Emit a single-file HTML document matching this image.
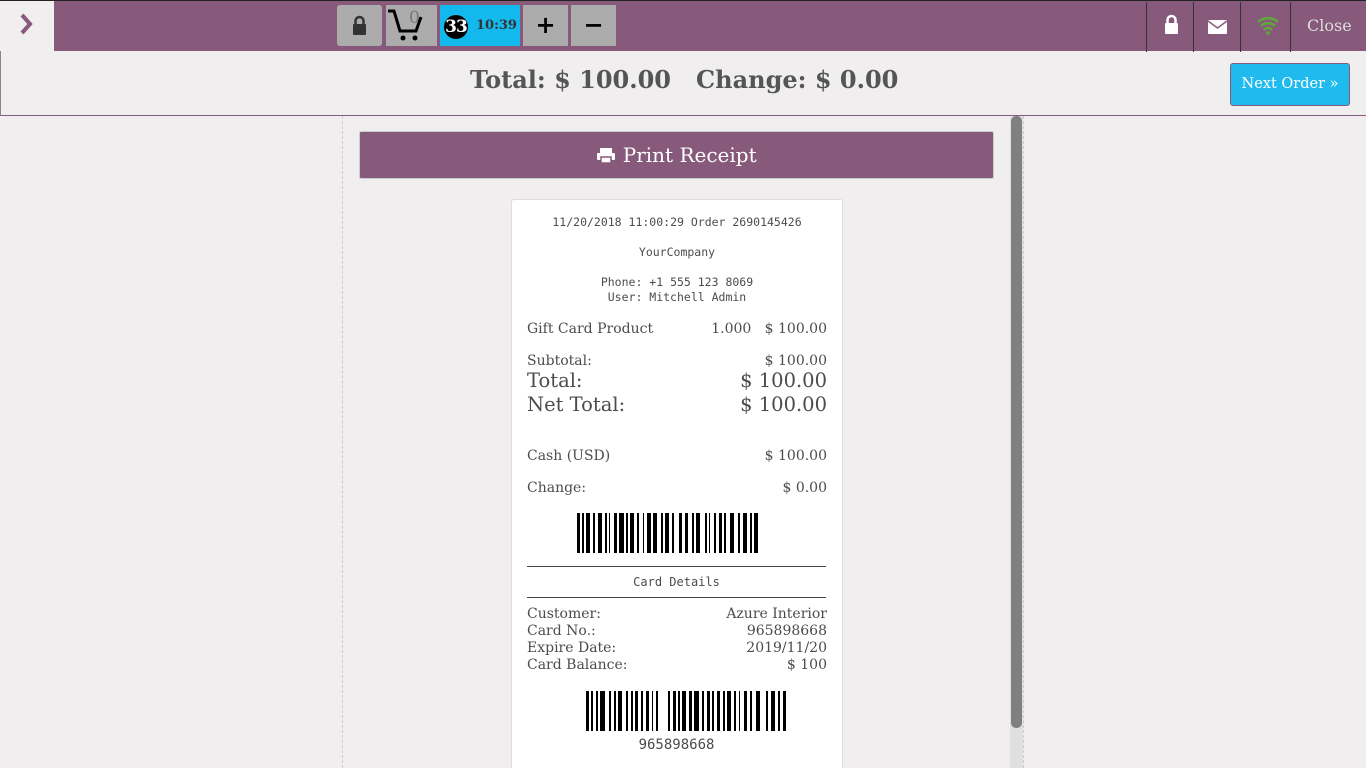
<!DOCTYPE html>
<html style="overflow:hidden"><head><meta charset="utf-8"><style>
*{box-sizing:border-box;margin:0;padding:0}
body{width:1366px;height:768px;overflow:hidden;background:#f0eeef;font-family:"DejaVu Serif","Liberation Serif",serif;color:#4c4c4c;position:relative}
.top{position:absolute;left:0;top:0;width:1366px;height:51px;background:#875a7b;border-top:1px solid #222}
.home{position:absolute;left:0;top:1px;width:54px;height:50px;background:#f0eeef}
.btn{position:absolute;top:4px;height:41px;background:#acacac;border-radius:3px}
.hdr{position:absolute;left:0;top:51px;width:1366px;height:65px;border-bottom:1px solid #875a7b;border-left:1px solid #888}
.mono{font-family:"DejaVu Sans Mono","Liberation Mono",monospace}
.r{position:absolute;left:527px;width:300px;font-size:14px;display:flex;justify-content:space-between}
.ic{position:absolute;top:1px;height:50px;border-left:1px solid #333}
</style></head><body>
<div class="top">
 <div class="btn" style="left:337px;width:45px"><svg width="45" height="41"><rect x="16" y="19" width="13" height="11" rx="1" fill="#333"/><path d="M18.5 19v-3a4 4 0 0 1 8 0v3" stroke="#333" stroke-width="2.5" fill="none"/></svg></div>
 <div class="btn" style="left:386px;width:51px;border-radius:0"><svg width="51" height="41"><path d="M2 6h6l6 20h16l5-14" stroke="#000" stroke-width="3" fill="none"/><circle cx="17" cy="33" r="2.5"/><circle cx="29" cy="33" r="2.5"/><text x="23" y="18" font-size="17" fill="#777" font-family="DejaVu Serif">0</text></svg></div>
 <div class="btn" style="left:440px;width:80px;background:#13b8ec;border-radius:0"><div style="position:absolute;left:4px;top:10px;width:24px;height:24px;border-radius:50%;background:#000;color:#fff;font-weight:bold;font-size:17px;line-height:24px;text-align:center;letter-spacing:-1px">33</div><div style="position:absolute;left:36px;top:13px;font-size:13px;font-weight:bold;color:#333">10:39</div></div>
 <div class="btn" style="left:523px;width:45px;border-radius:0;font:bold 24px 'DejaVu Sans';color:#000;text-align:center;line-height:41px">+</div>
 <div class="btn" style="left:571px;width:45px;border-radius:0;font:bold 24px 'DejaVu Sans';color:#000;text-align:center;line-height:41px">−</div>
 <div class="ic" style="left:1146px;width:47px"><svg width="47" height="50"><rect x="18" y="21" width="13" height="11" rx="1" fill="#fff"/><path d="M20.5 21v-3a4 4 0 0 1 8 0v3" stroke="#fff" stroke-width="2.5" fill="none"/></svg></div>
 <div class="ic" style="left:1193px;width:47px"><svg width="47" height="50"><rect x="14" y="18" width="19" height="14" rx="1" fill="#fff"/><path d="M14 19l9.5 7 9.5-7" stroke="#875a7b" stroke-width="1.5" fill="none"/></svg></div>
 <div class="ic" style="left:1240px;width:50px"><svg width="50" height="50"><g stroke="#5ea83a" stroke-width="2.5" fill="none"><path d="M17 20a15 15 0 0 1 20 0"/><path d="M20 24a10 10 0 0 1 14 0"/><path d="M23 28a5 5 0 0 1 8 0"/></g><circle cx="27" cy="31" r="1.8" fill="#5ea83a"/></svg></div>
 <div class="ic" style="left:1290px;width:76px;color:#ddd;font-size:16px;line-height:48px;padding-left:16px">Close</div>
</div>
<div class="home"><svg width="54" height="50"><path d="M22 14l8 9-8 9" stroke="#875a7b" stroke-width="4" fill="none"/></svg></div>
<div class="hdr">
 <div style="position:absolute;left:469px;top:14px;font-size:24px;font-weight:bold;color:#555;white-space:nowrap">Total: $ 100.00&nbsp;&nbsp; Change: $ 0.00</div>
 <div style="position:absolute;left:1229px;top:12px;width:120px;height:43px;background:#1fbbee;border:1px solid #875a7b;border-radius:3px;color:#fff;font-size:14.5px;line-height:41px;text-align:center">Next Order »</div>
</div>
<div style="position:absolute;left:342px;top:116px;width:682px;height:652px;border-left:1px dashed #ccc;border-right:1px dashed #ccc"></div>
<div style="position:absolute;left:1010px;top:116px;width:13px;height:652px;background:#e0e0e0"></div>
<div style="position:absolute;left:1011px;top:116px;width:11px;height:612px;background:#808080;border-radius:5px"></div>
<div style="position:absolute;left:359px;top:131px;width:635px;height:48px;background:#875a7b;border:1px solid #ccc;border-radius:2px;color:#fff;font-size:20px;line-height:46px;text-align:center"><svg width="20" height="16" style="vertical-align:-1px"><rect x="4" y="1" width="12" height="5" fill="#fff"/><rect x="1" y="6" width="18" height="7" rx="1" fill="#fff"/><rect x="5" y="10" width="10" height="6" fill="#fff" stroke="#875a7b" stroke-width="1.5"/></svg> Print Receipt</div>
<div style="position:absolute;left:511px;top:199px;width:332px;height:569px;background:#fff;border:1px solid #ddd;border-bottom:none;border-radius:3px 3px 0 0"></div>
<div class="mono" style="position:absolute;left:512px;top:215px;width:330px;text-align:center;font-size:11.5px;line-height:15px">11/20/2018 11:00:29 Order 2690145426<br><br>YourCompany<br><br>Phone: +1 555 123 8069<br>User: Mitchell Admin</div>
<div class="r" style="top:321px"><span>Gift Card Product</span><span>1.000&nbsp;&nbsp; $ 100.00</span></div>
<div class="r" style="top:353px"><span>Subtotal:</span><span>$ 100.00</span></div>
<div class="r" style="top:369px;font-size:19.5px"><span>Total:</span><span>$ 100.00</span></div>
<div class="r" style="top:393px;font-size:19.5px"><span>Net Total:</span><span>$ 100.00</span></div>
<div class="r" style="top:448px"><span>Cash (USD)</span><span>$ 100.00</span></div>
<div class="r" style="top:480px"><span>Change:</span><span>$ 0.00</span></div>
<svg style="position:absolute;left:577px;top:513px" width="181" height="40"><g fill="#000">
<rect x="0" y="0" width="3" height="40"/><rect x="5" y="0" width="2" height="40"/><rect x="9" y="0" width="4" height="40"/><rect x="16" y="0" width="2" height="40"/><rect x="21" y="0" width="4" height="40"/><rect x="28" y="0" width="2" height="40"/><rect x="32" y="0" width="1" height="40"/><rect x="37" y="0" width="3" height="40"/><rect x="42" y="0" width="5" height="40"/><rect x="49" y="0" width="2" height="40"/><rect x="53" y="0" width="4" height="40"/><rect x="60" y="0" width="2" height="40"/><rect x="66" y="0" width="1" height="40"/><rect x="70" y="0" width="4" height="40"/><rect x="76" y="0" width="4" height="40"/><rect x="84" y="0" width="2" height="40"/><rect x="88" y="0" width="4" height="40"/><rect x="95" y="0" width="2" height="40"/><rect x="102" y="0" width="3" height="40"/><rect x="108" y="0" width="3" height="40"/><rect x="115" y="0" width="2" height="40"/><rect x="119" y="0" width="4" height="40"/><rect x="128" y="0" width="2" height="40"/><rect x="132" y="0" width="1" height="40"/><rect x="137" y="0" width="2" height="40"/><rect x="142" y="0" width="3" height="40"/><rect x="147" y="0" width="2" height="40"/><rect x="153" y="0" width="4" height="40"/><rect x="161" y="0" width="2" height="40"/><rect x="166" y="0" width="4" height="40"/><rect x="173" y="0" width="2" height="40"/><rect x="177" y="0" width="4" height="40"/></g></svg>
<div style="position:absolute;left:527px;top:566px;width:299px;border-top:1px solid #444"></div>
<div class="mono" style="position:absolute;left:527px;top:575px;width:299px;text-align:center;font-size:12px">Card Details</div>
<div style="position:absolute;left:527px;top:597px;width:299px;border-top:1px solid #444"></div>
<div class="r" style="top:606px;line-height:17px"><span>Customer:</span><span>Azure Interior</span></div>
<div class="r" style="top:623px;line-height:17px"><span>Card No.:</span><span>965898668</span></div>
<div class="r" style="top:640px;line-height:17px"><span>Expire Date:</span><span>2019/11/20</span></div>
<div class="r" style="top:657px;line-height:17px"><span>Card Balance:</span><span>$ 100</span></div>
<svg style="position:absolute;left:586px;top:691px" width="203" height="40"><g fill="#000">
<rect x="0" y="0" width="3" height="40"/><rect x="5" y="0" width="2" height="40"/><rect x="10" y="0" width="2" height="40"/><rect x="14" y="0" width="5" height="40"/><rect x="23" y="0" width="2" height="40"/><rect x="28" y="0" width="2" height="40"/><rect x="32" y="0" width="4" height="40"/><rect x="40" y="0" width="2" height="40"/><rect x="45" y="0" width="2" height="40"/><rect x="49" y="0" width="3" height="40"/><rect x="55" y="0" width="2" height="40"/><rect x="60" y="0" width="3" height="40"/><rect x="66" y="0" width="1" height="40"/><rect x="70" y="0" width="2" height="40"/><rect x="82" y="0" width="2" height="40"/><rect x="87" y="0" width="3" height="40"/><rect x="92" y="0" width="2" height="40"/><rect x="96" y="0" width="4" height="40"/><rect x="103" y="0" width="3" height="40"/><rect x="108" y="0" width="5" height="40"/><rect x="116" y="0" width="2" height="40"/><rect x="121" y="0" width="3" height="40"/><rect x="126" y="0" width="2" height="40"/><rect x="131" y="0" width="3" height="40"/><rect x="137" y="0" width="2" height="40"/><rect x="141" y="0" width="4" height="40"/><rect x="148" y="0" width="2" height="40"/><rect x="153" y="0" width="1" height="40"/><rect x="158" y="0" width="3" height="40"/><rect x="164" y="0" width="2" height="40"/><rect x="170" y="0" width="4" height="40"/><rect x="180" y="0" width="2" height="40"/><rect x="185" y="0" width="4" height="40"/><rect x="192" y="0" width="2" height="40"/><rect x="197" y="0" width="3" height="40"/></g></svg>
<div class="mono" style="position:absolute;left:527px;top:737px;width:299px;text-align:center;font-size:14px">965898668</div>
</body></html>
